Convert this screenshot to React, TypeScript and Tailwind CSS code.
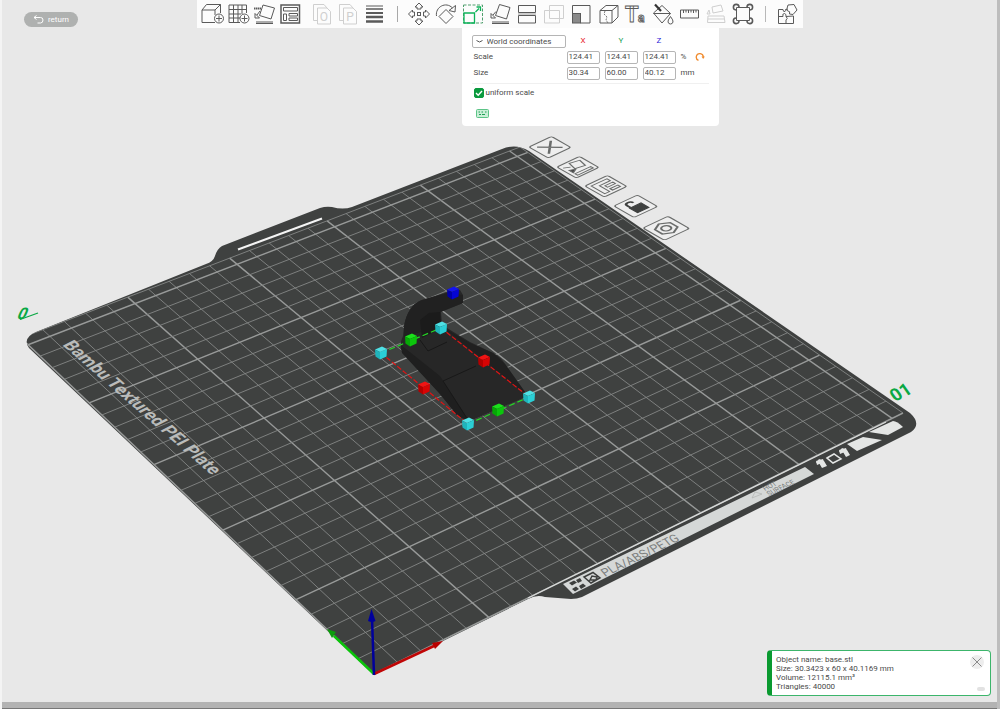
import { useState } from 'react'
import type { ReactNode } from 'react'

type Point = [number, number]

const BED = 256

// screen corners of the bed: front, right, back, left
const corners: Point[] = [[374, 674], [903, 413], [520, 147], [21, 338]]

function project(mx: number, my: number): Point {
  const [[x0, y0], [x1, y1], [x2, y2], [x3, y3]] = corners
  const u = mx / BED
  const v = my / BED
  const dx1 = x1 - x2
  const dx2 = x3 - x2
  const sx = x0 - x1 + x2 - x3
  const dy1 = y1 - y2
  const dy2 = y3 - y2
  const sy = y0 - y1 + y2 - y3
  const det = dx1 * dy2 - dx2 * dy1
  const g = (sx * dy2 - dx2 * sy) / det
  const h = (dx1 * sy - sx * dy1) / det
  const w = g * u + h * v + 1
  return [
    ((x1 - x0 + g * x1) * u + (x3 - x0 + h * x3) * v + x0) / w,
    ((y1 - y0 + g * y1) * u + (y3 - y0 + h * y3) * v + y0) / w,
  ]
}

const steps = Array.from({ length: 26 }, (_, i) => i * 10)

const plateOutline =
  'M374 675 L29 348 Q22 338 36 332 L206 264 Q213 262 215 256 Q217 249 222 246 L320 208 Q326 206 332 207 Q343 210 352 207 L502 149 Q516 143 529 151 L910 413 Q922 424 911 432 L582 597 Q577 599 571 599 L545 597 Q537 594 528 599Z'

function BedLine({ from, to, major }: { from: Point; to: Point; major?: boolean }) {
  const [x1, y1] = project(...from)
  const [x2, y2] = project(...to)
  return (
    <line x1={x1} y1={y1} x2={x2} y2={y2} stroke={major ? '#989a99' : '#858786'} strokeWidth={major ? 1.4 : 0.9} />
  )
}

function Cube({ x, y, colors }: { x: number; y: number; colors: string[] }) {
  return (
    <g transform={`translate(${x} ${y})`}>
      <path d="M-6 -3.5 L1 -6.5 L6 -4 L-1 -1Z" fill={colors[0]} />
      <path d="M-6 -3.5 L-1 -1 L-1 6.5 L-5.5 3.5Z" fill={colors[1]} />
      <path d="M-1 -1 L6 -4 L5.5 3.5 L-1 6.5Z" fill={colors[2]} />
    </g>
  )
}

const cyan = ['#4fe0e4', '#1fb4bb', '#2bcfd6']
const green = ['#1be01b', '#06a806', '#0cc60c']
const red = ['#f01414', '#b30000', '#d80404']
const blue = ['#1414f0', '#0000a8', '#0505d4']

const handles = [
  { x: 453, y: 293, colors: blue },
  { x: 441, y: 328, colors: cyan },
  { x: 411, y: 340, colors: green },
  { x: 381, y: 353, colors: cyan },
  { x: 484, y: 361, colors: red },
  { x: 424, y: 388, colors: red },
  { x: 529, y: 397, colors: cyan },
  { x: 498, y: 410, colors: green },
  { x: 468, y: 424, colors: cyan },
]

function PlateIcon({ x, y, scale = 1, children }: { x: number; y: number; scale?: number; children: ReactNode }) {
  return (
    <g
      transform={`translate(${x} ${y}) scale(${scale}) matrix(.98 -.46 .84 .48 0 0)`}
      fill="none"
      stroke="#6a6c6b"
      strokeWidth="1.2"
    >
      <rect x="0.5" y="0.5" width="23" height="23" rx="2" fill="#eeeeee" />
      {children}
    </g>
  )
}

function Scene() {
  return (
    <svg className="absolute inset-0 size-full" viewBox="0 0 1000 709" preserveAspectRatio="xMidYMid slice" aria-label="Build plate">
      <defs>
        <clipPath id="plate">
          <path d={plateOutline} />
        </clipPath>
      </defs>
      {/* plate */}
      <path d={plateOutline} fill="#3f4140" />
      <path d="M238 249.5 L322 218.5" stroke="#f4f4f4" strokeWidth="2" />
      <g clipPath="url(#plate)">
        {steps.map((s) => (
          <g key={s}>
            <BedLine from={[s, 0]} to={[s, BED]} major={s % 50 === 0} />
            <BedLine from={[0, s]} to={[BED, s]} major={s % 50 === 0} />
          </g>
        ))}
        <BedLine from={[BED, 0]} to={[BED, BED]} />
        <BedLine from={[0, BED]} to={[BED, BED]} />
      </g>
      <path d="M528 598 L886 422" stroke="#d9dbda" strokeWidth="1.3" />

      {/* plate lettering */}
      <g fontFamily="Roboto, 'Liberation Sans', sans-serif">
        <text transform="translate(62 345) rotate(41) skewX(-22)" fontSize="17" fontWeight="700" fill="#b9bbba">
          Bambu Textured PEI Plate
        </text>
        <path d="M563 584 L805 467 L814 474 L573 594Z" fill="#d5d8d7" />
        <text transform="translate(605 577) rotate(-26) skewX(14)" fontSize="12" fill="#7c7f7e">PLA/ABS/PETG</text>
        <text transform="translate(765 491) rotate(-26) skewX(14)" fontSize="7" fill="#7c7f7e">HOT</text>
        <text transform="translate(769 496) rotate(-26) skewX(14)" fontSize="7" fill="#7c7f7e">SURFACE</text>
        <text transform="translate(895 402) rotate(-27) skewX(8)" fontSize="18" fontWeight="700" fill="#0aa844">01</text>
        <text transform="translate(16 319) skewX(-24)" fontSize="16" fontWeight="700" fill="#0aa844">0</text>
      </g>
      <path d="M20 319.500 L38 313" stroke="#0aa844" strokeWidth="1.3" />
      <path d="M752 498 L755 492 L762 494Z" fill="none" stroke="#b0b3b2" strokeWidth="0.7" />
      <path
        d="M569 583 l5 -2.5 3 2 -5 3Z M576 580 l4 -2 2 3 -4 2Z M572 589 l4 -2.5 3 2.5 -4 2.5Z M579 586 l4 -2.5 3 2.5 -5 3Z"
        fill="#3c3e3d"
      />
      <path d="M584 577 l9 -4.500 7 5.500 -9 5Z M590 580 l2 -4 5 1 -1 3Z" fill="none" stroke="#3c3e3d" strokeWidth="1.5" />
      <g fill="#e4e6e5">
        <path d="M869 432 L893 421 Q897 421 903 427 L888 435Z" />
        <path d="M847 444 L863 437 L882 440 L857 451Z" />
        <path d="M816 463 L819 459 L824 461 L827 466 L822 468 L819 463Z M839 452 L842 448 L847 450 L850 455 L846 457 L843 452Z" />
        <path d="M816 461 l7 -2 1 3 -7 3Z M839 450 l7 -2 1 3 -7 3Z" />
      </g>
      <path d="M827 458 L834 454 L841 459 L833 463Z" fill="none" stroke="#e4e6e5" strokeWidth="1.5" />

      {/* per-plate buttons */}
      <PlateIcon x={528} y={147}>
        <path d="M5 5 L19 19 M19 5 L5 19" strokeWidth="2" />
      </PlateIcon>
      <PlateIcon x={556} y={167}>
        <path d="M11 3 L20 5 L18 14 L9 12Z M4 18 H20 V21 H4Z" />
        <path d="M3 5 L8 8" />
        <path d="M4 11 L9 13 L4 16Z" fill="#444" />
      </PlateIcon>
      <PlateIcon x={584} y={186}>
        <path d="M4 4 H20 V8 H9 V20 H4Z M12 11 H20 V14 H12Z M12 17 H20 V20 H12Z" />
      </PlateIcon>
      <PlateIcon x={613} y={206} scale={1.04}>
        <path d="M7 11 H18 V20 H7Z" fill="#3f4140" stroke="#3f4140" />
        <path d="M8 11 V7 Q8 4 11 4 Q14 4 14 7" strokeWidth="2" stroke="#3f4140" />
      </PlateIcon>
      <PlateIcon x={642} y={228} scale={1.11}>
        <path d="M5 8 L12 4 L19 8 V16 L12 20 L5 16Z" strokeWidth="1.6" />
        <circle cx="12" cy="12" r="3.5" strokeWidth="1.6" />
      </PlateIcon>

      {/* model */}
      <path
        d="M403 336 L404 326 Q408 305 422 300 L448 292 L460 290 L463 295 L463 303 L441 312 L442 325 L470 342 L493 353 Q501 357 505 364 L528 396 L468 422 L457 415 L440 394 L402 352Q399 344 403 336Z"
        fill="#272727"
      />
      <path d="M404 326 Q408 305 422 300 L448 293 L463 295 L463 303 L440 312 L441 326 L404 337Z" fill="#212121" />
      <path d="M420 320 L429 313 L440 312 L441 328 L422 338Z" fill="#1b1b1b" />
      <path d="M401 345 L440 376 L470 422 L457 415 L440 394 L402 353Z" fill="#1f1f1f" />
      <path d="M441 326 L470 343 L493 353 L505 364 L527 395 L486 362Z" fill="#202020" />
      <path d="M443 381 L476 366 M428 351 L447 342 M428 351 L420 340 M443 381 L468 420" fill="none" stroke="#181818" strokeWidth="1" />

      {/* selection frame */}
      <g fill="none" strokeWidth="1.2">
        <path d="M381 353 L468 424 M441 328 L529 397" stroke="#e01414" strokeDasharray="5 2" />
        <path d="M381 353 L441 328 M468 424 L529 397" stroke="#25d825" strokeDasharray="6 3" />
      </g>
      {handles.map((h) => (
        <Cube key={`${h.x}-${h.y}`} {...h} />
      ))}

      {/* axes */}
      <path d="M374 674 L334 636" stroke="#0ac40a" strokeWidth="2.5" />
      <path d="M327 629 L336 632 L332 638Z" fill="#0c9c0c" />
      <path d="M374 674 L434 646" stroke="#c00606" strokeWidth="2.5" />
      <path d="M443 641 L432 643 L435 649Z" fill="#b80000" />
      <path d="M374 675 L372 618" stroke="#00009c" strokeWidth="2.5" />
      <path d="M371.5 609 L368 621 Q372 623 375.5 621Z" fill="#00009c" />
    </svg>
  )
}

const arrows = 'M12 1 L16 5 H14 V7 H10 V5 H8Z M12 23 L16 19 H14 V17 H10 V19 H8Z M1.5 12 L5.5 8 V10 H7.5 V14 H5.5 V16Z M22.5 12 L18.5 8 V10 H16.5 V14 H18.5 V16Z'

const addTools = [
  {
    name: 'Add object',
    icon: (
      <>
        <path d="M15 20.5 H2 V8 H15 M2 8 L6.5 2.5 H20.5 L15 8 V13 M20.5 2.5 V11" />
        <circle cx="19" cy="16.5" r="4.5" />
        <path d="M19 13.5 V19.5 M16 16.5 H22" />
      </>
    ),
  },
  {
    name: 'Add plate',
    icon: (
      <>
        <path d="M3 3 H20.5 V11 M3 3 V20.5 H14 M7.5 3 V20.5 M12 3 V20.5 M16 3 V12 M3 7.5 H20.5 M3 12 H15 M3 16 H14" />
        <circle cx="18.5" cy="16.5" r="4.5" />
        <path d="M18.5 13.5 V19.5 M15.5 16.5 H21.5" />
      </>
    ),
  },
  {
    name: 'Auto orient',
    icon: (
      <>
        <path d="M11 3 L22.5 6 L19 17 L7.5 13.5Z M4 20 H21 M4 21.5 H21" />
        <path d="M2 6.5 H9" strokeWidth="2" strokeDasharray="1.5 0.5" />
        <path d="M8 9 L5 13 M3 11.5 V16 H7.5Z" />
      </>
    ),
  },
  {
    name: 'Arrange',
    icon: (
      <>
        <rect x="3" y="3" width="18.5" height="18" strokeWidth="1.5" />
        <path d="M5.5 5.5 H19.5 V9 H5.5Z M5.5 12 H8.5 V18.5 H5.5Z M11 11.5 H19.5 V14 H11Z M11 16 H19.5 V18.5 H11Z" />
      </>
    ),
  },
]

const pageTools = [
  {
    name: 'Split to objects',
    muted: true,
    icon: (
      <>
        <path d="M7 18.5 H3.5 V2.5 H14 L17 6 M7.5 6 H17 L20.5 9.5 V22 H7.5Z" />
        <text x="14" y="18.5" textAnchor="middle" fontSize="12" fontFamily="Roboto, sans-serif" stroke="none" fill="currentColor">O</text>
      </>
    ),
  },
  {
    name: 'Split to parts',
    muted: true,
    icon: (
      <>
        <path d="M7 18.5 H3.5 V2.5 H14 L17 6 M7.5 6 H17 L20.5 9.5 V22 H7.5Z" />
        <text x="14" y="18.5" textAnchor="middle" fontSize="12" fontFamily="Roboto, sans-serif" stroke="none" fill="currentColor">P</text>
      </>
    ),
  },
  {
    name: 'Variable layer height',
    icon: (
      <>
        <path d="M4 4 H21" strokeWidth="1" />
        <path d="M4 7 H21" strokeWidth="1.5" />
        <path d="M4 11 H21" strokeWidth="2" />
        <path d="M4 15 H21 M4 19.5 H21" strokeWidth="2.5" />
      </>
    ),
  },
]

const editTools = [
  {
    name: 'Move',
    icon: (
      <>
        <path d={arrows} />
        <rect x="10.5" y="10.5" width="3" height="3" />
      </>
    ),
  },
  {
    name: 'Rotate',
    icon: <path d="M12 7.5 L19 14.5 L12 21.5 L5 14.5Z M2.5 14 C1 5 12 -1 18.5 6 M21.5 3.5 L21 10 L15 8.5Z" />,
  },
  {
    name: 'Scale',
    icon: (
      <>
        <rect x="2.5" y="3" width="19" height="18" stroke="#4f9f6d" strokeDasharray="3 1.5" />
        <path d="M3 11 H13.5 V21 H3Z M14.5 10 L18 6.5 M15.5 5 H19.5 V9" stroke="#0db359" strokeWidth="1.3" />
      </>
    ),
  },
  {
    name: 'Lay on face',
    icon: <path d="M11.5 2.5 L22 5.5 L18.5 17 L7.5 13.5Z M4 20 H21 M4 21.5 H21 M8 9.5 L5 13 M3 11.5 V16 H7.5Z" />,
  },
  {
    name: 'Cut',
    icon: (
      <>
        <path d="M3.5 3.5 H20.5 V10.5 H3.5Z M3.5 13.5 H20.5 V21 H3.5Z" />
        <path d="M3 12 H21" strokeWidth="0.6" />
      </>
    ),
  },
  { name: 'Mesh boolean', muted: true, icon: <path d="M2.5 8.5 H17.5 V21 H2.5Z M7.5 3.5 H21.5 V16.5 H7.5Z" /> },
  {
    name: 'Supports',
    icon: (
      <>
        <path d="M3.5 3.5 H21 V21 H11.5 V11.5 H3.5Z" />
        <rect x="3.5" y="11.5" width="8" height="9.500" fill="#8a8a8a" />
      </>
    ),
  },
  {
    name: 'Seam',
    icon: (
      <>
        <path d="M4 8.5 H16 V21 H4Z M4 8.5 L10 3.5 H22 L16 8.5 M22 3.5 V15 L16 21" />
        <path d="M9 9 L8 12 L11 15 L10 18 L12 21" strokeDasharray="2 1" strokeWidth="0.8" />
      </>
    ),
  },
  {
    name: 'Text',
    icon: (
      <g fontFamily="Roboto, sans-serif" fontWeight="700">
        <text x="2" y="20" fontSize="22" strokeWidth="0.9" opacity="0.99">T</text>
        <text x="15" y="20" fontSize="12" strokeWidth="0.9" opacity="0.99">a</text>
      </g>
    ),
  },
  {
    name: 'Colour painting',
    icon: (
      <>
        <path d="M3.5 11 L12 3.5 L20.5 11.5 L12 21Z M3.5 11.5 H20.5" />
        <path d="M5 2.5 L11 9" strokeWidth="2.2" stroke="#333" />
        <path d="M20.5 14.5 Q17.5 18.5 18 20 Q18.5 22 20.5 22 Q22.5 22 23 20 Q23.5 18.5 20.5 14.5Z" fill="#fcfcfc" />
      </>
    ),
  },
  { name: 'Measure', icon: <path d="M3.5 8 H21.5 V16 H3.5Z M6.5 8 V11 M9 8 V10.5 M11.5 8 V11 M14 8 V10.5 M16.5 8 V11 M19 8 V10.5" /> },
  {
    name: 'Assembly view',
    muted: true,
    icon: <path d="M4 14 L20 14 L21 20.5 H3.5Z M8 5 L17 3 L19 9 L9 11Z M5 8 L3 12 H6Z M4 17 H20" />,
  },
  {
    name: 'Frame',
    icon: (
      <>
        <path d="M5.5 5.5 H18.5 V18.5 H5.5Z" />
        <path d="M8 5 A2.8 2.8 0 1 0 5 8 M16 5 A2.8 2.8 0 1 1 19 8 M5 16 A2.8 2.8 0 1 0 8 19 M19 16 A2.8 2.8 0 1 1 16 19" strokeWidth="1.6" />
      </>
    ),
  },
]

const lastTools = [
  {
    name: 'Assemble',
    icon: (
      <path d="M3.5 7.5 H8 Q8 10 10 9.5 Q11 9 10.5 7.5 L13 7 M3.5 7.5 V21.5 H18.5 V14 M3.5 14.5 H8 Q7 11.5 9.5 11.5 Q11.5 12 11 14.5 L18.5 14 M11 14.5 Q13.5 16.5 11 18 L11 21.5 M13 3 L19 2.5 L22 8 L18 12.5 L14.5 12 Q15.5 9 13 9 Q11 8.5 12 6.5Z" />
    ),
  },
]

type Tool = { name: string; icon: ReactNode; muted?: boolean }

function ToolGroup({ tools, wide }: { tools: Tool[]; wide?: boolean }) {
  return (
    <div className="flex">
      {tools.map((t) => (
        <button
          key={t.name}
          aria-label={t.name}
          className={`flex h-[27px] items-center justify-center hover:bg-gray-100 ${wide ? 'w-[27px]' : 'w-[26px]'} ${t.muted ? 'text-[#cfcfcf]' : 'text-[#5a5a5a]'}`}
        >
          <svg className="overflow-visible" width="24" height="24" viewBox="0 0 24 24" fill="none" stroke="currentColor" strokeWidth="1">
            {t.icon}
          </svg>
        </button>
      ))}
    </div>
  )
}

function ScalePanel() {
  const [uniform, setUniform] = useState(true)
  const rows = [
    { label: 'Scale', values: ['124.41', '124.41', '124.41'], unit: '%' },
    { label: 'Size', values: ['30.34', '60.00', '40.12'], unit: 'mm' },
  ]

  return (
    <div className="absolute left-[265px] top-full w-[257px] rounded-b-sm bg-white px-[10px] pb-2 pt-[5px] text-[8px] leading-4 text-[#4a4a4a]">
      <div className="grid grid-cols-[95px_38px_38px_38px_auto] items-center">
        <div className="relative">
          <select aria-label="Coordinate system" className="block h-[13px] w-[94px] appearance-none rounded-xs border border-[#b5b5b5] bg-white pl-[14px] leading-[11px]">
            <option>World coordinates</option>
          </select>
          <svg className="pointer-events-none absolute left-1 top-1" width="7" height="5" viewBox="0 0 7 5" fill="none" stroke="#555">
            <path d="M0.5 1.5 Q3.5 4.5 6.5 1.5" />
          </svg>
        </div>
        <span className="w-[33px] text-center text-[#e8202a]">X</span>
        <span className="w-[33px] text-center text-[#1ea45a]">Y</span>
        <span className="w-[33px] text-center text-[#2a20d8]">Z</span>
        <span />
        {rows.map((r) => (
          <div key={r.label} className="col-span-5 grid h-4 grid-cols-subgrid items-center">
            <span className="pl-[2px]">{r.label}</span>
            {r.values.map((v, i) => (
              <input
                key={i}
                aria-label={`${r.label} ${'XYZ'[i]}`}
                defaultValue={v}
                className="h-[13px] w-[33px] rounded-xs border border-[#b5b5b5] bg-white pl-px"
              />
            ))}
            <span className="flex items-center justify-between pr-1">
              {r.unit}
              {r.unit === '%' && (
                <button aria-label="Reset scale">
                  <svg width="10" height="10" viewBox="0 0 10 10" fill="none" stroke="#f08a2c" strokeWidth="1.3">
                    <path d="M3.5 8.3 A3.5 3.5 0 1 1 8.3 5" />
                    <path d="M6.5 4.5 H9.8 L8.2 7Z" fill="#f08a2c" stroke="none" />
                  </svg>
                </button>
              )}
            </span>
          </div>
        ))}
      </div>
      <div className="mt-[2px] border-t border-[#f0f0f0]" />
      <label className="mt-px flex items-center gap-[2px] pl-[2px]">
        <span className="relative flex size-[10px]">
          <input
            type="checkbox"
            checked={uniform}
            onChange={() => setUniform(!uniform)}
            className="size-[10px] appearance-none rounded-xs border border-[#0a9a3e] checked:bg-[#0a9a3e]"
          />
          {uniform && (
            <svg className="pointer-events-none absolute inset-0" width="10" height="10" viewBox="0 0 10 10" fill="none" stroke="#fff" strokeWidth="1.4">
              <path d="M2 5 L4.2 7.2 L8 3" />
            </svg>
          )}
        </span>
        uniform scale
      </label>
      <button aria-label="Keyboard shortcuts" className="ml-1 mt-2 block">
        <svg width="13" height="9" viewBox="0 0 13 9" fill="none" stroke="#5cc487">
          <rect x="0.5" y="0.5" width="12" height="8" rx="1" fill="#c9efd7" />
          <path d="M2.5 3 H4 M5.5 3 H7 M9 3 H10.5 M3 5.5 H5 M6 5.5 H9" stroke="#1f9f55" />
        </svg>
      </button>
    </div>
  )
}

function ObjectInfo() {
  return (
    <section className="absolute bottom-[6px] right-[6px] flex w-[224px] rounded-sm border border-l-[5px] border-[#3cb56b] border-l-[#0a9a30] bg-white py-1 pl-1 text-[8px] leading-[9px] text-[#4a4a4a]">
      <div className="flex-1">
        <p>Object name: base.stl</p>
        <p>Size: 30.3423 x 60 x 40.1169 mm</p>
        <p>Volume: 12115.1 mm³</p>
        <p>Triangles: 40000</p>
      </div>
      <div className="flex flex-col items-center justify-between pr-[5px]">
        <button aria-label="Close" className="rounded-full bg-[#ededed]">
          <svg width="14" height="14" viewBox="0 0 14 14" stroke="#8a8a8a">
            <path d="M2.5 2.5 L11.5 11.5 M11.5 2.5 L2.5 11.5" />
          </svg>
        </button>
        <span className="ml-2 h-1 w-2 rounded-full bg-[#e2e2e2]" />
      </div>
    </section>
  )
}

export default function App() {
  return (
    <div className="relative flex min-h-screen flex-col overflow-hidden border-l-2 border-r-3 border-l-[#f4f4f4] border-r-[#bdbdbd] bg-[#e8e8e8] font-[Roboto,'Liberation_Sans',sans-serif]">
      <div className="absolute -left-[2px] -right-[3px] inset-y-0">
        <Scene />
      </div>
      <header className="relative flex justify-center">
        <button className="absolute left-[22px] top-3 flex h-[15px] w-[54px] items-center justify-center gap-1 rounded-full bg-[#afb1b0] text-[8px] text-white">
          <svg width="11" height="9" viewBox="0 0 11 9" fill="none" stroke="currentColor">
            <path d="M3.5 0.5 L1 2.5 L3.5 4.5 M1 2.5 H7.5 Q10 2.5 10 5 Q10 8 7.5 8 H4.5" />
          </svg>
          return
        </button>
        <div className="relative flex items-center bg-[#fcfcfc] pb-px pl-[2px] pr-[2px]">
          <ToolGroup tools={addTools} />
          <div className="w-[6px]" />
          <ToolGroup tools={pageTools} />
          <div className="ml-[10px] mr-2 h-4 w-px bg-[#a8a8a8]" />
          <ToolGroup tools={editTools} wide />
          <div className="mx-2 h-4 w-px bg-[#b8b8b8]" />
          <ToolGroup tools={lastTools} wide />
          <ScalePanel />
        </div>
      </header>
      <main className="relative flex-1">
        <ObjectInfo />
      </main>
      <footer className="relative h-[7px] border-b border-[#777] bg-[#b3b3b3]" />
    </div>
  )
}
